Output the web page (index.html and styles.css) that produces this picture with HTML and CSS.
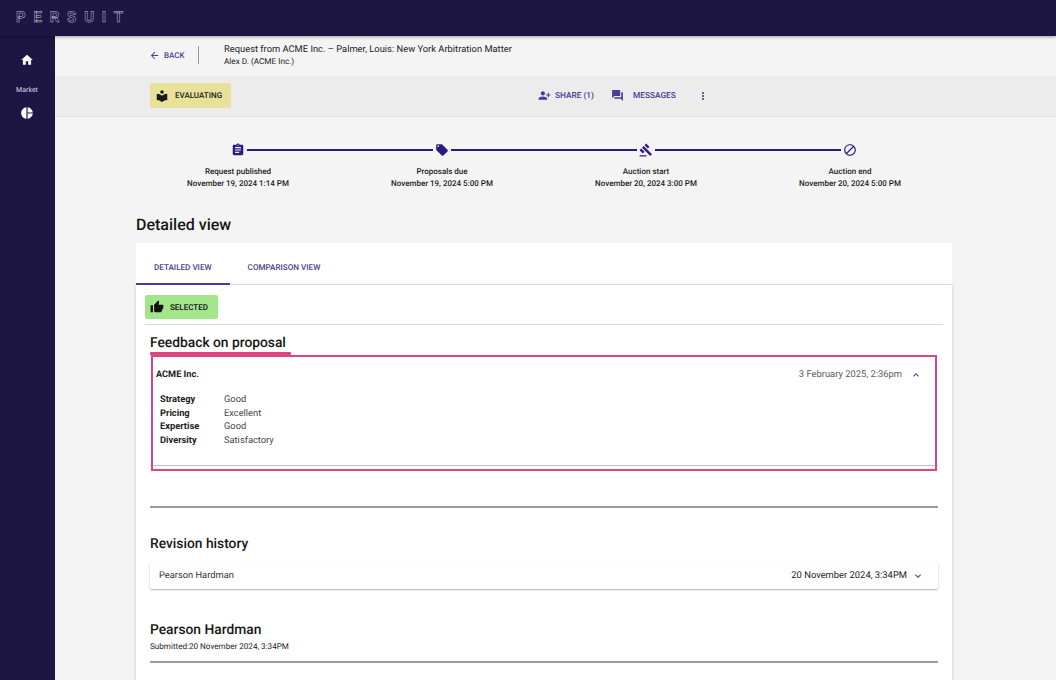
FILE: index.html
```html
<!DOCTYPE html>
<html lang="en">
<head>
    <meta charset="UTF-8">
    <title>Persuit - Detailed view</title>
    <link rel="stylesheet" href="styles.css">
</head>
<body>
    <!-- Top bar -->
    <header class="topbar">
        <span class="logo">PERSUIT</span>
    </header>

    <div class="layout">
        <!-- Sidebar -->
        <aside class="sidebar">
            <svg class="side-icon" viewBox="0 0 24 24"><path d="M10 20v-6h4v6h5v-8h3L12 3 2 12h3v8z"/></svg>
            <span class="side-label">Market</span>
            <svg class="side-icon" viewBox="0 0 24 24"><path d="M11 2v20c-5.07-.5-9-4.79-9-10s3.93-9.5 9-10zm2.03 0v8.99H22c-.47-4.74-4.24-8.52-8.97-8.99zm0 11.01V22c4.74-.47 8.5-4.25 8.97-8.99h-8.97z"/></svg>
        </aside>

        <main class="main">
            <!-- Request header -->
            <div class="subhead">
                <a class="back" href="#">
                    <svg viewBox="0 0 24 24"><path d="M20 11H7.83l5.59-5.59L12 4l-8 8 8 8 1.41-1.41L7.83 13H20v-2z"/></svg>
                    BACK
                </a>
                <div class="subhead-text">
                    <div class="request-title">Request from ACME Inc. – Palmer, Louis: New York Arbitration Matter</div>
                    <div class="request-owner">Alex D. (ACME Inc.)</div>
                </div>
            </div>

            <!-- Status and actions -->
            <div class="toolbar">
                <div class="status-chip">
                    <svg viewBox="0 0 24 24"><path d="M12 11.55C9.64 9.35 6.48 8 3 8v11c3.48 0 6.64 1.35 9 3.55 2.36-2.19 5.52-3.55 9-3.55V8c-3.48 0-6.64 1.35-9 3.55zM12 8c1.66 0 3-1.34 3-3s-1.34-3-3-3-3 1.34-3 3 1.34 3 3 3z"/></svg>
                    EVALUATING
                </div>
                <div class="actions">
                    <a class="action action-share" href="#">
                        <svg class="flip" viewBox="0 0 24 24"><path d="M15 12c2.21 0 4-1.79 4-4s-1.79-4-4-4-4 1.79-4 4 1.79 4 4 4zm-9-2V7H4v3H1v2h3v3h2v-3h3v-2H6zm9 4c-2.67 0-8 1.34-8 4v2h16v-2c0-2.66-5.33-4-8-4z"/></svg>
                        SHARE (1)
                    </a>
                    <a class="action action-messages" href="#">
                        <svg viewBox="0 0 24 24"><path d="M21 6h-2v9H6v2c0 .55.45 1 1 1h11l4 4V7c0-.55-.45-1-1-1zm-4 6V3c0-.55-.45-1-1-1H3c-.55 0-1 .45-1 1v14l4-4h10c.55 0 1-.45 1-1z"/></svg>
                        MESSAGES
                    </a>
                    <svg class="more" viewBox="0 0 24 24"><path d="M12 8c1.1 0 2-.9 2-2s-.9-2-2-2-2 .9-2 2 .9 2 2 2zm0 2c-1.1 0-2 .9-2 2s.9 2 2 2 2-.9 2-2-.9-2-2-2zm0 6c-1.1 0-2 .9-2 2s.9 2 2 2 2-.9 2-2-.9-2-2-2z"/></svg>
                </div>
            </div>

            <div class="page">
                <!-- Timeline -->
                <div class="steps">
                    <div class="step">
                        <div class="step-head">
                            <span class="step-line hidden"></span>
                            <svg viewBox="0 0 24 24"><path d="M19 3h-4.18C14.4 1.84 13.3 1 12 1c-1.3 0-2.4.84-2.82 2H5c-1.1 0-2 .9-2 2v14c0 1.1.9 2 2 2h14c1.1 0 2-.9 2-2V5c0-1.1-.9-2-2-2zm-7 0c.55 0 1 .45 1 1s-.45 1-1 1-1-.45-1-1 .45-1 1-1zm2 14H7v-2h7v2zm3-4H7v-2h10v2zm0-4H7V7h10v2z"/></svg>
                            <span class="step-line"></span>
                        </div>
                        <div class="step-label">Request published</div>
                        <div class="step-date">November 19, 2024 1:14 PM</div>
                    </div>
                    <div class="step">
                        <div class="step-head">
                            <span class="step-line"></span>
                            <svg viewBox="0 0 24 24"><path d="M21.41 11.58l-9-9C12.05 2.22 11.55 2 11 2H4c-1.1 0-2 .9-2 2v7c0 .55.22 1.05.59 1.42l9 9c.36.36.86.58 1.41.58.55 0 1.05-.22 1.41-.59l7-7c.37-.36.59-.86.59-1.41 0-.55-.23-1.06-.59-1.42zM5.5 7C4.67 7 4 6.33 4 5.5S4.67 4 5.5 4 7 4.67 7 5.5 6.33 7 5.5 7z"/></svg>
                            <span class="step-line"></span>
                        </div>
                        <div class="step-label">Proposals due</div>
                        <div class="step-date">November 19, 2024 5:00 PM</div>
                    </div>
                    <div class="step">
                        <div class="step-head">
                            <span class="step-line"></span>
                            <svg viewBox="0 0 24 24"><path d="M1 21h12v2H1zM5.245 8.07l2.83-2.827 14.14 14.142-2.828 2.828zM12.317 1l5.657 5.656-2.83 2.83-5.654-5.66zM3.825 9.485l5.657 5.657-2.828 2.828-5.657-5.657z"/></svg>
                            <span class="step-line"></span>
                        </div>
                        <div class="step-label">Auction start</div>
                        <div class="step-date">November 20, 2024 3:00 PM</div>
                    </div>
                    <div class="step">
                        <div class="step-head">
                            <span class="step-line"></span>
                            <svg viewBox="0 0 24 24"><path d="M12 2C6.48 2 2 6.48 2 12s4.48 10 10 10 10-4.48 10-10S17.52 2 12 2zM4 12c0-4.42 3.58-8 8-8 1.85 0 3.55.63 4.9 1.69L5.69 16.9C4.63 15.55 4 13.85 4 12zm8 8c-1.85 0-3.55-.63-4.9-1.69L18.31 7.1C19.37 8.45 20 10.15 20 12c0 4.42-3.58 8-8 8z"/></svg>
                            <span class="step-line hidden"></span>
                        </div>
                        <div class="step-label">Auction end</div>
                        <div class="step-date">November 20, 2024 5:00 PM</div>
                    </div>
                </div>

                <h1 class="page-title">Detailed view</h1>

                <!-- Tabs -->
                <div class="card">
                    <div class="tabs">
                        <a class="tab tab-active" href="#">DETAILED VIEW</a>
                        <a class="tab" href="#">COMPARISON VIEW</a>
                    </div>

                    <div class="panel">
                        <div class="selected-chip">
                            <svg viewBox="0 0 24 24"><path d="M1 21h4V9H1v12zm22-11c0-1.1-.9-2-2-2h-6.31l.95-4.57.03-.32c0-.41-.17-.79-.44-1.06L14.17 1 7.59 7.59C7.22 7.95 7 8.45 7 9v10c0 1.1.9 2 2 2h9c.83 0 1.54-.5 1.84-1.22l3.02-7.05c.09-.23.14-.47.14-.73v-2z"/></svg>
                            SELECTED
                        </div>
                        <hr class="thin-rule">

                        <div class="panel-body">
                            <h2 class="feedback-title">Feedback on proposal</h2>

                            <!-- Feedback accordion, with the pink highlight on top -->
                            <div class="feedback">
                                <span class="mark-line"></span>
                                <span class="mark-box"></span>
                                <div class="feedback-head">
                                    <span class="feedback-name">ACME Inc.</span>
                                    <span class="feedback-date">3 February 2025, 2:36pm</span>
                                    <svg class="chevron" viewBox="0 0 24 24"><path d="M12 8l-6 6 1.41 1.41L12 10.83l4.59 4.58L18 14z"/></svg>
                                </div>
                                <div class="ratings">
                                    <span class="rating-name">Strategy</span><span>Good</span>
                                    <span class="rating-name">Pricing</span><span>Excellent</span>
                                    <span class="rating-name">Expertise</span><span>Good</span>
                                    <span class="rating-name">Diversity</span><span>Satisfactory</span>
                                </div>
                            </div>

                            <hr class="thick-rule rule-feedback">

                            <h2 class="section-title">Revision history</h2>
                            <div class="revision">
                                <span class="revision-name">Pearson Hardman</span>
                                <span class="revision-date">20 November 2024, 3:34PM</span>
                                <svg class="chevron" viewBox="0 0 24 24"><path d="M16.59 8.59L12 13.17 7.41 8.59 6 10l6 6 6-6z"/></svg>
                            </div>

                            <h2 class="section-title firm-title">Pearson Hardman</h2>
                            <div class="submitted">Submitted:20 November 2024, 3:34PM</div>
                            <hr class="thick-rule">
                        </div>
                    </div>
                </div>
            </div>
        </main>
    </div>
</body>
</html>
```

FILE: styles.css
```css
/* General page */
html, body {
    height: 100%;
}

body {
    margin: 0;
    height: 680px;
    overflow: hidden;
    display: flex;
    flex-direction: column;
    font-family: Roboto, "Liberation Sans", sans-serif;
    text-rendering: geometricPrecision;
    color: #1c1c1c;
    background-color: #f4f4f4;
}

a {
    text-decoration: none;
    color: #4b3b96;
}

svg {
    display: block;
    fill: currentColor;
    flex-shrink: 0;
}

h1, h2 {
    margin: 0;
    font-weight: 500;
}

/* Top bar */
.topbar {
    position: relative;
    z-index: 2;
    height: 36px;
    flex-shrink: 0;
    padding-left: 16px;
    display: flex;
    align-items: center;
    background-color: #1e1642;
    box-shadow: 0 1px 3px rgba(0, 0, 0, 0.35);
}

.logo {
    font-size: 15px;
    font-weight: 700;
    letter-spacing: 7.8px;
    color: #1e1642;
    -webkit-text-stroke: 0.5px #bdbacb;
    position: relative;
    top: -1px;
}

.layout {
    flex: 1;
    display: flex;
    min-height: 0;
}

/* Sidebar */
.sidebar {
    width: 55px;
    flex-shrink: 0;
    display: flex;
    flex-direction: column;
    align-items: center;
    padding-top: 17px;
    padding-right: 1px;
    box-sizing: border-box;
    color: #fff;
    background-color: #1e1642;
}

.side-icon {
    width: 14px;
    height: 14px;
}

.side-label {
    margin-top: 18px;
    margin-bottom: 11px;
    font-size: 7px;
    line-height: 10px;
    color: #d8d6e2;
}

/* Main column */
.main {
    flex: 1;
    min-width: 0;
}

.subhead {
    height: 40px;
    box-sizing: border-box;
    padding-left: 94px;
    padding-bottom: 2px;
    display: flex;
    align-items: center;
}

.back {
    width: 49px;
    height: 18px;
    display: flex;
    align-items: center;
    gap: 4px;
    font-size: 8px;
    font-weight: 500;
    border-right: 1px solid #9a9a9a;
}

.back svg {
    width: 11px;
    height: 11px;
}

.subhead-text {
    margin-left: 25px;
}

.request-title {
    font-size: 9.35px;
    line-height: 13px;
}

.request-owner {
    font-size: 8.2px;
    line-height: 12px;
}

.toolbar {
    height: 41px;
    box-sizing: border-box;
    padding-left: 95px;
    padding-bottom: 2px;
    display: flex;
    align-items: center;
    background-color: #ececec;
    border-top: 1px solid #efefef;
    border-bottom: 1px solid #e2e2e2;
}

.status-chip {
    width: 81px;
    height: 25px;
    box-sizing: border-box;
    padding-left: 5px;
    display: flex;
    align-items: center;
    gap: 6px;
    font-size: 8px;
    font-weight: 500;
    color: #1a1a1a;
    background-color: #e8e19a;
    border-radius: 2px;
}

.status-chip svg {
    width: 14px;
    height: 14px;
}

.actions {
    margin-left: 307px;
    display: flex;
    align-items: center;
}

.action {
    display: flex;
    align-items: center;
    font-size: 8.3px;
    font-weight: 500;
}

.action-share {
    gap: 4px;
    margin-right: 17px;
}

.action-share svg {
    width: 13px;
    height: 13px;
}

.action-messages {
    gap: 9px;
    margin-right: 21px;
}

.action-messages svg {
    width: 13px;
    height: 13px;
}

.flip {
    transform: scaleX(-1);
}

.more {
    width: 12px;
    height: 12px;
    color: #4b3b96;
}

/* Content under the toolbar */
.page {
    padding-left: 81px;
    width: 816px;
}

.steps {
    display: grid;
    grid-template-columns: repeat(4, 1fr);
    padding-top: 26px;
}

.step {
    text-align: center;
    font-size: 8px;
    line-height: 12px;
    font-weight: 500;
}

.step-head {
    display: flex;
    align-items: center;
    gap: 2px;
    height: 14px;
    margin-bottom: 9px;
    color: #2e1a7e;
}

.step-head svg {
    width: 14px;
    height: 14px;
}

.step-line {
    flex: 1;
    height: 2px;
    background-color: #2e1a7e;
}

.hidden {
    visibility: hidden;
}

.page-title {
    margin-top: 25px;
    font-size: 16px;
    line-height: 20px;
    color: #171717;
}

.card {
    margin-top: 8px;
    height: 460px;
}

/* Tabs */
.tabs {
    display: flex;
    height: 42px;
    box-sizing: border-box;
    background-color: #fff;
}

.tab {
    height: 42px;
    box-sizing: border-box;
    padding: 0 18px;
    line-height: 48px;
    font-size: 8.1px;
    font-weight: 500;
}

.tab-active {
    border-bottom: 2px solid #4b3b96;
}

.panel {
    height: 418px;
    box-sizing: border-box;
    padding: 10px 9px 0;
    background-color: #fff;
    border-top: 1px solid #dcdcdc;
    margin-top: -1px;
    box-shadow: 0 1px 3px rgba(0, 0, 0, 0.2);
}

.selected-chip {
    width: 73px;
    height: 24px;
    box-sizing: border-box;
    padding-left: 5px;
    display: flex;
    align-items: center;
    gap: 6px;
    font-size: 8px;
    font-weight: 500;
    color: #111;
    background-color: #a2e58b;
    border-radius: 2px;
}

.selected-chip svg {
    width: 14px;
    height: 14px;
}

.thin-rule {
    margin: 5px 0 0;
    border: 0;
    border-top: 1px solid #d8d8d8;
}

.panel-body {
    padding: 0 5px;
}

.feedback-title {
    margin-top: 9px;
    font-size: 13.8px;
    line-height: 18px;
    color: #141414;
}

/* Feedback accordion */
.feedback {
    position: relative;
    margin-top: 3px;
    height: 111px;
    box-sizing: border-box;
    border-bottom: 1px solid #c4c4c4;
}

.mark-line {
    position: absolute;
    left: 0;
    top: -3px;
    width: 141px;
    height: 3px;
    background-color: #dd4482;
    border-radius: 1px;
}

.mark-box {
    position: absolute;
    left: 1px;
    right: 1px;
    top: 0;
    height: 116px;
    box-sizing: border-box;
    border: 2px solid #dd4482;
}

.feedback-head {
    height: 38px;
    box-sizing: border-box;
    padding: 1px 16px 0 6px;
    display: flex;
    align-items: center;
    font-size: 9.2px;
}

.feedback-name {
    font-weight: 700;
    flex: 1;
}

.feedback-date {
    color: #5c5c5c;
    margin-right: 8px;
    font-size: 9.4px;
}

.chevron {
    width: 12px;
    height: 12px;
    color: #4b3b96;
}

.ratings {
    margin: 0 0 0 10px;
    display: grid;
    grid-template-columns: 64px 1fr;
    grid-auto-rows: 13.6px;
    align-items: center;
    font-size: 9.3px;
    color: #444;
}

.rating-name {
    font-weight: 700;
    color: #222;
}

.thick-rule {
    margin: 0;
    border: 0;
    border-top: 2px solid #9b9b9b;
}

.rule-feedback {
    margin-top: 40px;
}

.section-title {
    margin-top: 27px;
    font-size: 13.8px;
    line-height: 18px;
    color: #171717;
}

/* Revision row */
.revision {
    margin-top: 9px;
    height: 27px;
    box-sizing: border-box;
    padding: 0 14px 0 9px;
    display: flex;
    align-items: center;
    font-size: 9.3px;
    color: #333;
    background-color: #fff;
    border-radius: 2px;
    box-shadow: 0 1px 2px rgba(0, 0, 0, 0.3);
}

.revision-name {
    flex: 1;
}

.revision-date {
    margin-right: 5px;
    color: #222;
    font-size: 9.4px;
}

.firm-title {
    margin-top: 32px;
    font-size: 13.8px;
}

.submitted {
    font-size: 8.1px;
    line-height: 12px;
    margin-top: 1px;
}

.submitted + .thick-rule {
    margin-top: 9px;
}
```
